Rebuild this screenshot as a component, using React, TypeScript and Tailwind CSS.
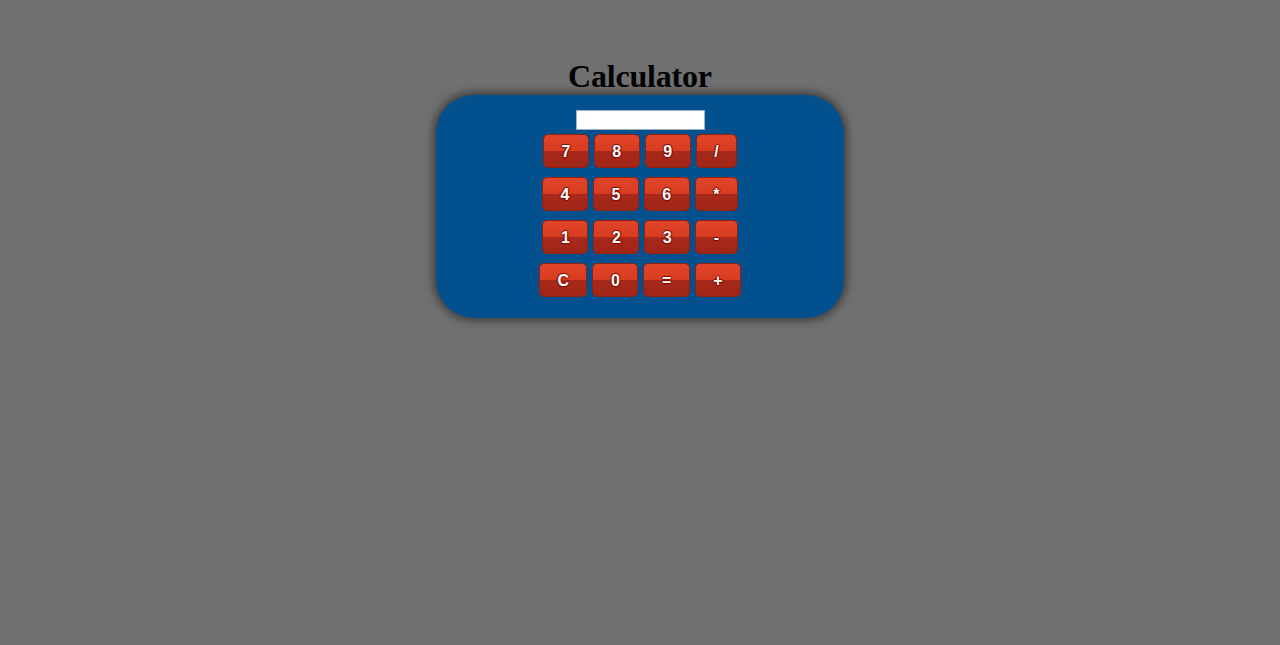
import React from "react";

const rows: string[][] = [
  ["7", "8", "9", "/"],
  ["4", "5", "6", "*"],
  ["1", "2", "3", "-"],
  ["C", "0", "=", "+"],
];

function Key({ label }: { label: string }) {
  return (
    <button
      className="h-[34px] px-[17.5px] pt-[1px] rounded-[5px] border border-[#8c2214] text-white font-bold text-[16px] leading-none bg-[linear-gradient(to_bottom,#e0452a_0%,#d83c20_50%,#a8291a_50%,#a02617_100%)] [text-shadow:1px_0_1px_#7a0c00,-1px_0_1px_#7a0c00,0_1px_1px_#7a0c00,0_-1px_1px_#7a0c00]"
      style={{ fontFamily: '"Liberation Sans", Arial, sans-serif' }}
    >
      {label}
    </button>
  );
}

export default function App() {
  return (
    <div className="min-h-[645px] w-full bg-[#707070] flex flex-col items-center pt-[57px]">
      <h1
        className="text-[32px] font-bold text-black leading-[38px] m-0 tracking-[-0.2px]"
        style={{ fontFamily: '"Liberation Serif", "Times New Roman", serif' }}
      >
        Calculator
      </h1>
      <div className="w-[408px] h-[223px] bg-[#03508f] rounded-[38px] shadow-[0_0_8px_3px_rgba(0,0,0,0.45)] flex flex-col items-center pt-[15px]">
        <input
          type="text"
          readOnly
          className="w-[129px] h-[20px] bg-white border border-[#9fb0c6] outline-none"
        />
        <div className="flex flex-col gap-[9px] mt-[4px]">
          {rows.map((r, i) => (
            <div key={i} className="flex justify-center gap-[5px]">
              {r.map((k) => (
                <Key key={k} label={k} />
              ))}
            </div>
          ))}
        </div>
      </div>
    </div>
  );
}
